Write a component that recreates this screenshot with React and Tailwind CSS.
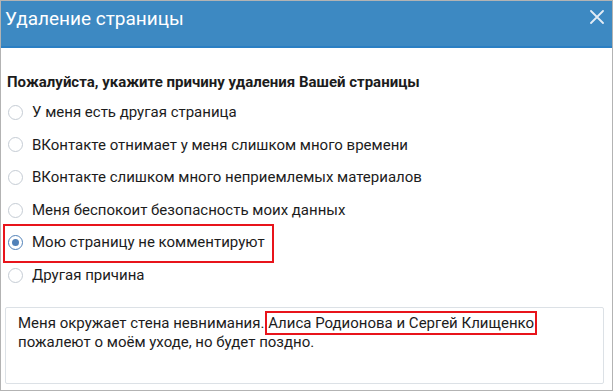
import { useState } from 'react'

const reasons = [
  'У меня есть другая страница',
  'ВКонтакте отнимает у меня слишком много времени',
  'ВКонтакте слишком много неприемлемых материалов',
  'Меня беспокоит безопасность моих данных',
  'Мою страницу не комментируют',
  'Другая причина',
]

function Radio({ checked }) {
  return (
    <span
      className={`flex h-[15px] w-[15px] shrink-0 items-center justify-center rounded-full border bg-white ${
        checked ? 'border-[#5181b8]' : 'border-[#c5ccd4]'
      }`}
    >
      {checked && <span className="h-[7px] w-[7px] rounded-full bg-[#5181b8]" />}
    </span>
  )
}

export default function App() {
  const [selected, setSelected] = useState(4)

  return (
    <div
      className="flex h-[391px] w-[613px] flex-col border border-[#b3b3b3] bg-white text-[#1c1c1c]"
      style={{ fontFamily: 'Roboto, "Noto Sans", sans-serif' }}
    >
      <div className="flex h-[47px] shrink-0 items-start justify-between border-b-2 border-[#2b7fc3] bg-[#3d89c2] pl-[4px] pr-[8px] pt-[6px]">
        <span className="text-[19px] leading-[24px] text-white">Удаление страницы</span>
        <svg width="14" height="14" viewBox="0 0 14 14" className="mt-[3px]">
          <path d="M1 1L13 13M13 1L1 13" stroke="#e3ecf5" strokeWidth="1.8" strokeLinecap="round" />
        </svg>
      </div>

      <div className="flex flex-1 flex-col pl-[4px] pr-[8px]">
        <div className="flex h-[33px] items-center pl-[2px] pt-[34px] pb-[14px] text-[15px] font-bold leading-[20px]">
          Пожалуйста, укажите причину удаления Вашей страницы
        </div>

        <div className="flex flex-col">
          {reasons.map((r, i) => (
            <label
              key={r}
              onClick={() => setSelected(i)}
              className="relative flex h-[32.6px] cursor-pointer items-center gap-[9px] pl-[3px] text-[15px]"
            >
              {selected === i && i === 4 && (
                <span className="pointer-events-none absolute left-[-2px] top-[-2px] h-[39px] w-[271px] border-2 border-[#e8141b]" />
              )}
              <Radio checked={selected === i} />
              <span>{r}</span>
            </label>
          ))}
        </div>

        <div className="mt-[15px] h-[77px] rounded-[2px] border border-[#dce1e6] pl-[12px] pr-[9px] pt-[6px] text-[15px] leading-[19px]">
          Меня окружает стена невнимания.{' '}
          <span className="-mx-[3px] border-2 border-[#e8141b] px-[1px] py-[1px]">Алиса Родионова и Сергей Клищенко</span>
          <br />
          пожалеют о моём уходе, но будет поздно.
        </div>
      </div>
    </div>
  )
}
